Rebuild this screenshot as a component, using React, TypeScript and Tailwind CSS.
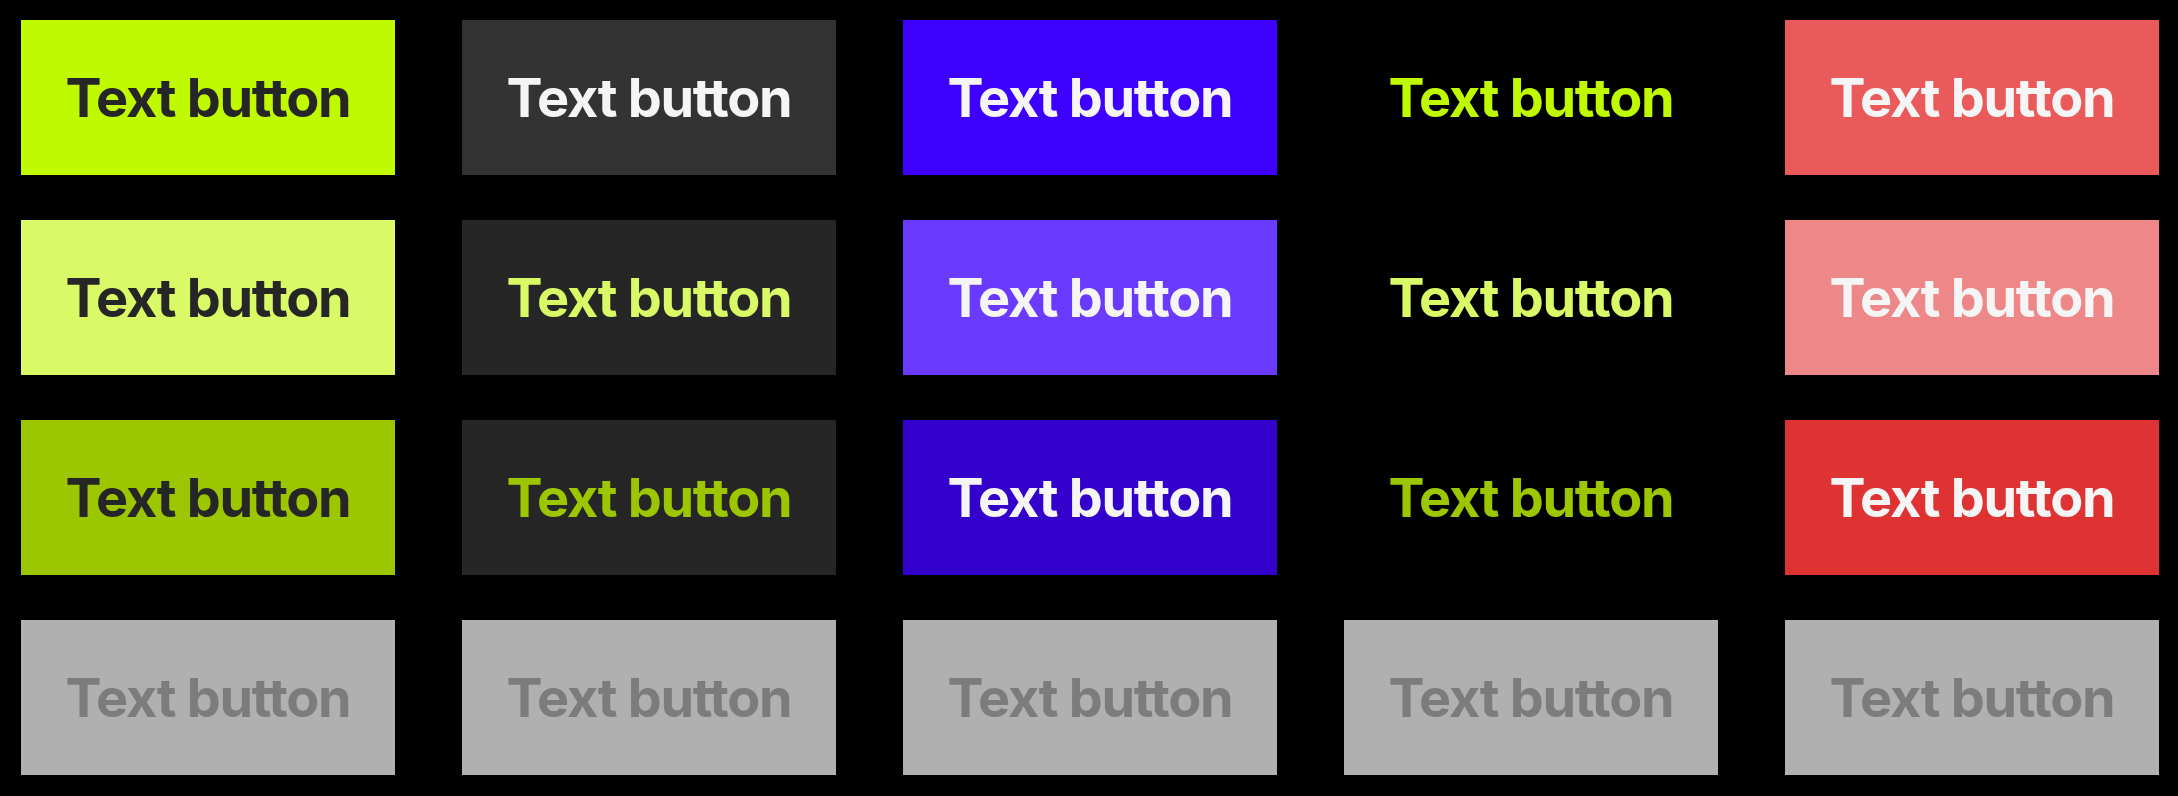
const rows = [
  [
    "bg-[#c0fa00] text-[#262626]",
    "bg-[#333333] text-[#f5f5f5]",
    "bg-[#3d00ff] text-[#f5f5f5]",
    "bg-black text-[#c0fa00]",
    "bg-[#eb5a5a] text-[#f5f5f5]",
  ],
  [
    "bg-[#d9f966] text-[#262626]",
    "bg-[#262626] text-[#d9f966]",
    "bg-[#6a3aff] text-[#f5f5f5]",
    "bg-black text-[#d9f966]",
    "bg-[#ee8888] text-[#f5f5f5]",
  ],
  [
    "bg-[#9cc700] text-[#262626]",
    "bg-[#262626] text-[#9cc700]",
    "bg-[#3300cc] text-[#f5f5f5]",
    "bg-black text-[#9cc700]",
    "bg-[#df3333] text-[#f5f5f5]",
  ],
  [
    "bg-[#b0b0b0] text-[#7c7c7c]",
    "bg-[#b0b0b0] text-[#7c7c7c]",
    "bg-[#b0b0b0] text-[#7c7c7c]",
    "bg-[#b0b0b0] text-[#7c7c7c]",
    "bg-[#b0b0b0] text-[#7c7c7c]",
  ],
];

function TextButton({ className }: { className: string }) {
  return (
    <button
      type="button"
      className={`flex h-[155px] w-[374px] items-center justify-center text-[54px] font-bold tracking-[-1.3px] ${className}`}
    >
      Text button
    </button>
  );
}

export default function App() {
  return (
    <div className="min-h-[796px] w-[2178px] bg-black pl-[21px] pt-[20px] font-['Inter',sans-serif]">
      <div className="flex flex-col gap-[45px]">
        {rows.map((row, i) => (
          <div key={i} className="flex gap-[67px]">
            {row.map((cls, j) => (
              <TextButton key={j} className={cls} />
            ))}
          </div>
        ))}
      </div>
    </div>
  );
}
